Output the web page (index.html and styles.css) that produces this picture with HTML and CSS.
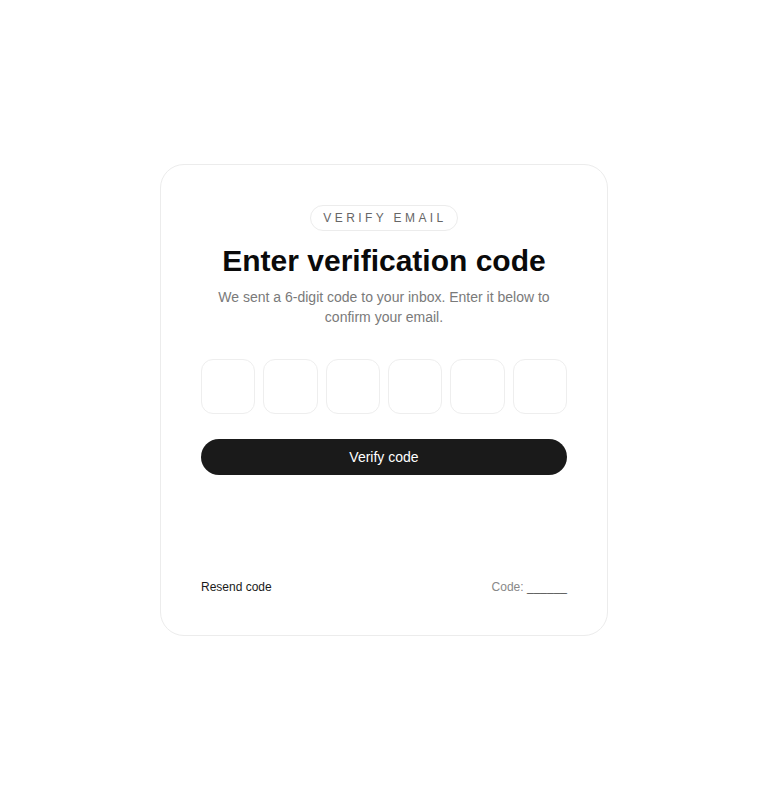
FILE: index.html
```html
<!DOCTYPE html>
<html lang="en">
<head>
<meta charset="utf-8">
<title>Verify email</title>
<link rel="stylesheet" href="styles.css">
</head>
<body>
<main class="page">
  <section class="card">
    <span class="badge">VERIFY EMAIL</span>
    <h1 class="title">Enter verification code</h1>
    <p class="subtitle">We sent a 6-digit code to your inbox. Enter it below to confirm your email.</p>
    <div class="otp">
      <input class="otp-box" type="text" maxlength="1" aria-label="Digit 1">
      <input class="otp-box" type="text" maxlength="1" aria-label="Digit 2">
      <input class="otp-box" type="text" maxlength="1" aria-label="Digit 3">
      <input class="otp-box" type="text" maxlength="1" aria-label="Digit 4">
      <input class="otp-box" type="text" maxlength="1" aria-label="Digit 5">
      <input class="otp-box" type="text" maxlength="1" aria-label="Digit 6">
    </div>
    <button class="verify" type="button">Verify code</button>
    <div class="footer">
      <a class="resend" href="#">Resend code</a>
      <span class="code">Code: <span class="code-value">______</span></span>
    </div>
  </section>
</main>
</body>
</html>
```
FILE: styles.css
```css
* { box-sizing: border-box; }
html, body { margin: 0; padding: 0; background: #ffffff; }
body {
  font-family: "Liberation Sans", Arial, sans-serif;
  color: #111;
}
.page {
  min-height: 800px;
  display: flex;
  align-items: center;
  justify-content: center;
}
.card {
  width: 448px;
  min-height: 472px;
  border: 1px solid #ececec;
  border-radius: 24px;
  padding: 40px;
  display: flex;
  flex-direction: column;
  align-items: center;
  background: #fff;
}
.badge {
  display: inline-block;
  height: 26px;
  line-height: 24px;
  padding: 0 10px 0 12px;
  border: 1px solid #ececec;
  border-radius: 13px;
  font-size: 12px;
  letter-spacing: 3.4px;
  color: #666;
}
.title {
  margin: 12px 0 0;
  font-size: 30px;
  line-height: 36px;
  font-weight: 700;
  color: #0a0a0a;
  text-align: center;
}
.subtitle {
  margin: 8px 0 0;
  max-width: 340px;
  font-size: 14px;
  line-height: 20px;
  color: #7a7a7a;
  text-align: center;
}
.otp {
  margin-top: 32px;
  width: 100%;
  display: grid;
  grid-template-columns: repeat(6, 1fr);
  gap: 8px;
}
.otp-box {
  width: 100%;
  height: 55px;
  border: 1px solid #eeeeee;
  border-radius: 12px;
  background: #fff;
  text-align: center;
  font-size: 20px;
  font-family: inherit;
  outline: none;
  padding: 0;
}
.verify {
  margin-top: 25px;
  width: 100%;
  height: 36px;
  border: none;
  border-radius: 18px;
  background: #1a1a1a;
  color: #fff;
  font-family: inherit;
  font-size: 14px;
  cursor: pointer;
}
.footer {
  margin-top: auto;
  width: 100%;
  display: flex;
  justify-content: space-between;
  align-items: center;
  font-size: 12px;
  line-height: 16px;
}
.resend {
  color: #1a1a1a;
  text-decoration: none;
}
.code { color: #888; }
.code-value { color: #555; }
```
